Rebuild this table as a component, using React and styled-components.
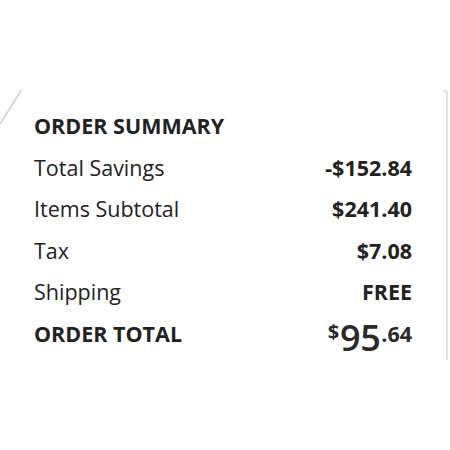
import React from "react";
import styled, { createGlobalStyle } from "styled-components";

const GlobalStyle = createGlobalStyle`
  html, body {
    margin: 0;
    padding: 0;
    background: #fff;
  }
  body {
    font-family: "Open Sans", "Liberation Sans", sans-serif;
    color: #222;
  }
`;

const Panel = styled.section`
  position: relative;
  box-sizing: border-box;
  width: 448px;
  height: 270px;
  margin-top: 90px;
  padding: 15px 34px 0;
  border-right: 2px solid #e2e2e2;
  border-top-right-radius: 4px;

  &::after {
    content: "";
    position: absolute;
    top: 0;
    right: -2px;
    width: 5px;
    height: 4px;
    border-top: 2px solid #e2e2e2;
    border-right: 2px solid #e2e2e2;
    border-top-right-radius: 4px;
    box-sizing: border-box;
  }
`;

const Slash = styled.svg`
  position: absolute;
  top: 0;
  left: 0;
`;

const Row = styled.div`
  display: flex;
  justify-content: space-between;
  align-items: baseline;
  font-size: 21.5px;
  line-height: 41.5px;
  font-weight: ${(p) => (p.$strong ? 700 : 400)};
`;

const Label = styled.span``;

const Value = styled.span`
  font-weight: 700;
`;

const Total = styled.span`
  font-weight: 700;
  color: #2a2a2a;
`;

const Sup = styled.span`
  font-size: ${(p) => p.$size || "21.5px"};
  vertical-align: ${(p) => p.$shift || "0"};
  line-height: 1;
`;

const Big = styled.span`
  font-size: 36px;
  font-weight: 600;
  line-height: 1;
  vertical-align: -9px;
  letter-spacing: -0.5px;
  margin: 0 1px;
`;

const rows = [
  { label: "Total Savings", value: "-$152.84" },
  { label: "Items Subtotal", value: "$241.40" },
  { label: "Tax", value: "$7.08" },
  { label: "Shipping", value: "FREE" },
];

export default function App() {
  return (
    <>
      <GlobalStyle />
      <Panel>
        <Slash width="24" height="36" viewBox="0 0 24 36">
          <line x1="21.5" y1="0" x2="0" y2="34" stroke="#d4d4d4" strokeWidth="2" />
        </Slash>
        <Row $strong>
          <Label>ORDER SUMMARY</Label>
        </Row>
        {rows.map((r) => (
          <Row key={r.label}>
            <Label>{r.label}</Label>
            <Value>{r.value}</Value>
          </Row>
        ))}
        <Row $strong>
          <Label>ORDER TOTAL</Label>
          <Total>
            <Sup $size="20px" $shift="3px">$</Sup>
            <Big>95</Big>
            <Sup>.64</Sup>
          </Total>
        </Row>
      </Panel>
    </>
  );
}
